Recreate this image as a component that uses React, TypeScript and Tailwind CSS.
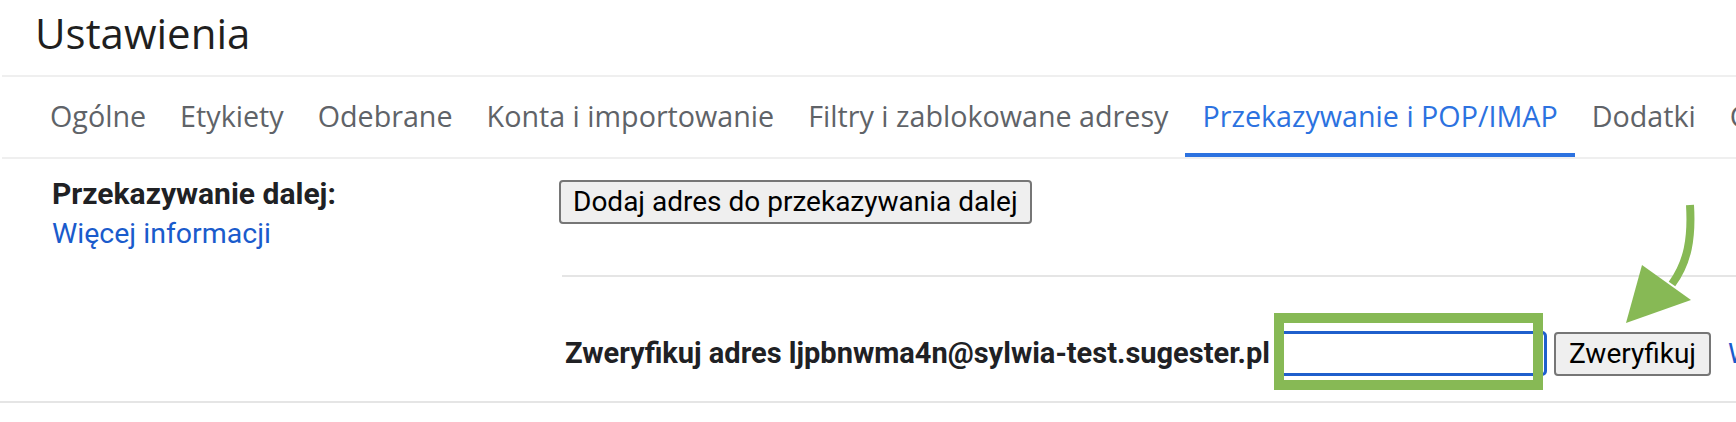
const tabs = [
  'Ogólne',
  'Etykiety',
  'Odebrane',
  'Konta i importowanie',
  'Filtry i zablokowane adresy',
  'Przekazywanie i POP/IMAP',
  'Dodatki',
  'Czat i Meet',
];

const ACTIVE = 'Przekazywanie i POP/IMAP';

export default function App() {
  return (
    <div className="relative w-[1736px] h-[422px] overflow-hidden bg-white font-['Roboto',sans-serif]">
      {/* header */}
      <div className="h-[75px] pl-[35px] pt-[3px] font-['Open_Sans',sans-serif] text-[42px] leading-[60px] text-[#1f1f1f]">
        Ustawienia
      </div>
      <div className="ml-[2px] h-[2px] bg-[#efefef]" />

      {/* tabs */}
      <div className="flex h-[80px] pl-[33px] overflow-hidden whitespace-nowrap font-['Open_Sans',sans-serif] text-[28.7px]">
        {tabs.map((t) => (
          <div
            key={t}
            className={
              t === ACTIVE
                ? 'relative shrink-0 flex items-center px-[17px] pb-[2px] text-[#2c72e0]'
                : 'relative shrink-0 flex items-center px-[17px] pb-[2px] text-[#5f6368]'
            }
          >
            {t}
            {t === ACTIVE && <div className="absolute left-0 right-0 bottom-0 h-[4px] bg-[#2c72e0]" />}
          </div>
        ))}
      </div>
      <div className="ml-[2px] h-[2px] bg-[#efefef]" />

      {/* forwarding row */}
      <div className="flex">
        <div className="w-[559px] shrink-0 pl-[52px] pt-[15px] leading-[40px]">
          <div className="text-[30px] font-bold text-[#202124]">Przekazywanie dalej:</div>
          <a className="text-[28.5px] text-[#1a5bcc]">Więcej informacji</a>
        </div>

        <div className="flex-1 min-w-0 pt-[21px]">
          <button className="h-[44px] px-[12px] bg-[#efefef] border-2 border-[#767676] rounded-[4px] text-[28px] text-black leading-none">
            Dodaj adres do przekazywania dalej
          </button>
          <div className="mt-[51px] ml-[3px] h-[2px] bg-[#e5e5e5]" />

          <div className="flex items-center h-[45px] mt-[54px] ml-[6px] whitespace-nowrap">
            <span className="text-[29px] font-bold text-[#202124]">
              Zweryfikuj adres ljpbnwma4n@sylwia-test.sugester.pl
            </span>
            <div className="relative ml-[9px] shrink-0">
              <div className="w-[268px] h-[45px] border-[3px] border-[#1f5fcc] rounded-[5px] bg-white" />
              {/* annotation box */}
              <div className="absolute left-[-5px] top-[-18px] w-[269px] h-[77px] border-[10px] border-[#87b955]" />
            </div>
            <button className="ml-[7px] h-[44px] px-[13px] shrink-0 bg-[#efefef] border-2 border-[#767676] rounded-[4px] text-[28px] text-black leading-none">
              Zweryfikuj
            </button>
            <a className="ml-[17px] text-[28px] text-[#1a5bcc]">Wyślij ponownie e-mail weryfikacyjny</a>
          </div>
        </div>
      </div>
      <div className="mt-[25px] h-[2px] bg-[#e5e5e5]" />

      {/* annotation arrow */}
      <svg className="absolute inset-0 pointer-events-none" width="1736" height="422" viewBox="0 0 1736 422">
        <path d="M1690 205 C1692 238 1688 262 1672 284" fill="none" stroke="#87b955" strokeWidth="8" />
        <polygon points="1642,265 1691,300 1626,323" fill="#87b955" />
      </svg>
    </div>
  );
}
